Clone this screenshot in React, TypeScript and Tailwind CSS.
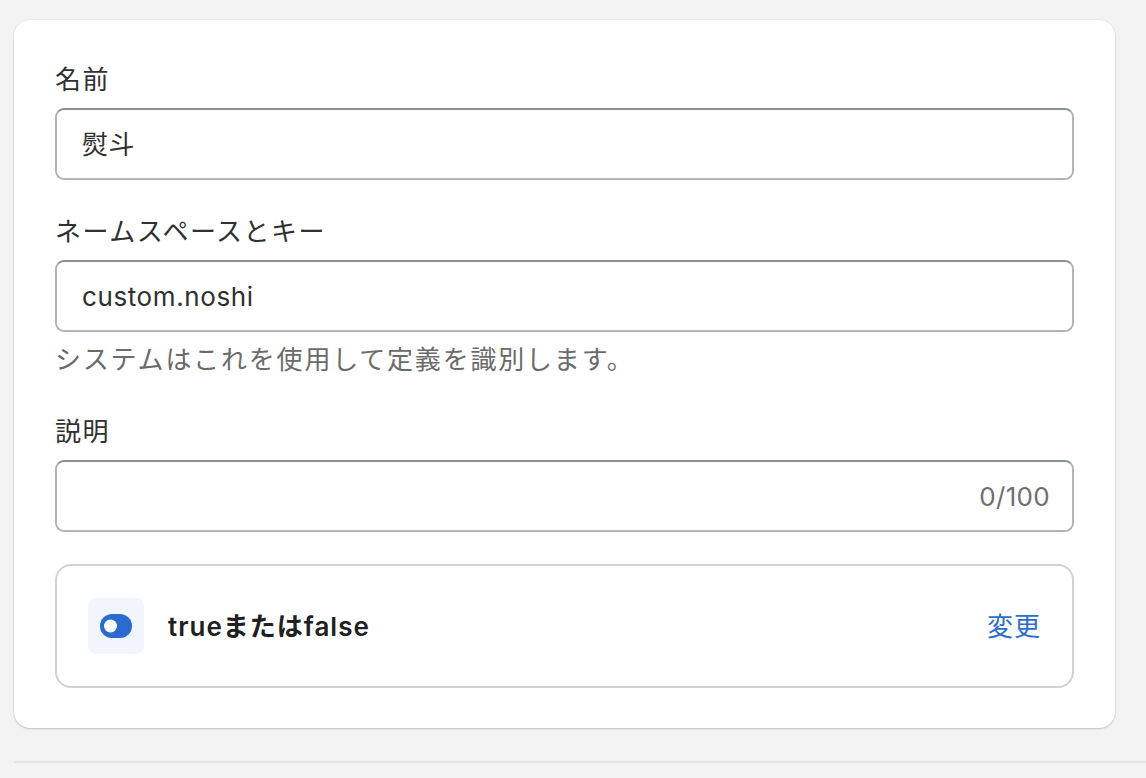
const font = "font-['Inter','Noto_Sans_CJK_JP',sans-serif]";

function Field({ label, value, right, help }: { label: string; value?: string; right?: string; help?: string }) {
  return (
    <div className="flex flex-col">
      <label className="text-[26px] leading-[40px] tracking-[1.5px] text-[#303030]">{label}</label>
      <div className="mt-2 flex h-[72px] items-center justify-between rounded-[9px] border-2 border-[#b1b4b8] border-t-[#8c9196] bg-white pl-[25px] pr-[22px]">
        <span className="text-[26px] tracking-[0.6px] text-[#303030]">{value}</span>
        {right && <span className="text-[26px] tracking-[0.3px] text-[#6f6f6f]">{right}</span>}
      </div>
      {help && <p className="mt-2 text-[26px] leading-[40px] tracking-[1.8px] text-[#6b6b6b]">{help}</p>}
    </div>
  );
}

function ToggleIcon() {
  return (
    <svg width="32" height="24" viewBox="0 0 32 24">
      <rect x="0" y="0" width="32" height="24" rx="12" fill="#2a6bcf" />
      <circle cx="10.5" cy="12" r="6.5" fill="white" />
    </svg>
  );
}

export default function App() {
  return (
    <div className={`${font} min-h-[778px] w-full bg-[#f3f3f4] pt-5`}>
      <div className="ml-[14px] w-[1101px] rounded-2xl bg-white px-[41px] pb-10 pt-10 shadow-[0_1px_2px_rgba(0,0,0,0.18),0_0_0_1px_rgba(0,0,0,0.03)]">
        <div className="flex flex-col gap-8">
          <Field label="名前" value="熨斗" />
          <Field label="ネームスペースとキー" value="custom.noshi" help="システムはこれを使用して定義を識別します。" />
          <Field label="説明" right="0/100" />
          <div className="flex items-center gap-6 rounded-2xl border-2 border-[#d2d2d2] px-[31px] py-8">
            <div className="flex h-14 w-14 items-center justify-center rounded-lg bg-[#f0f5fe]">
              <ToggleIcon />
            </div>
            <span className="flex-1 text-[26px] font-semibold tracking-[1px] text-[#202020]">trueまたはfalse</span>
            <button className="text-[26px] tracking-[1px] text-[#2c6ecb]">変更</button>
          </div>
        </div>
      </div>
      <div className="ml-[14px] mt-[33px] h-[2px] bg-[#e3e3e3]" />
    </div>
  );
}
